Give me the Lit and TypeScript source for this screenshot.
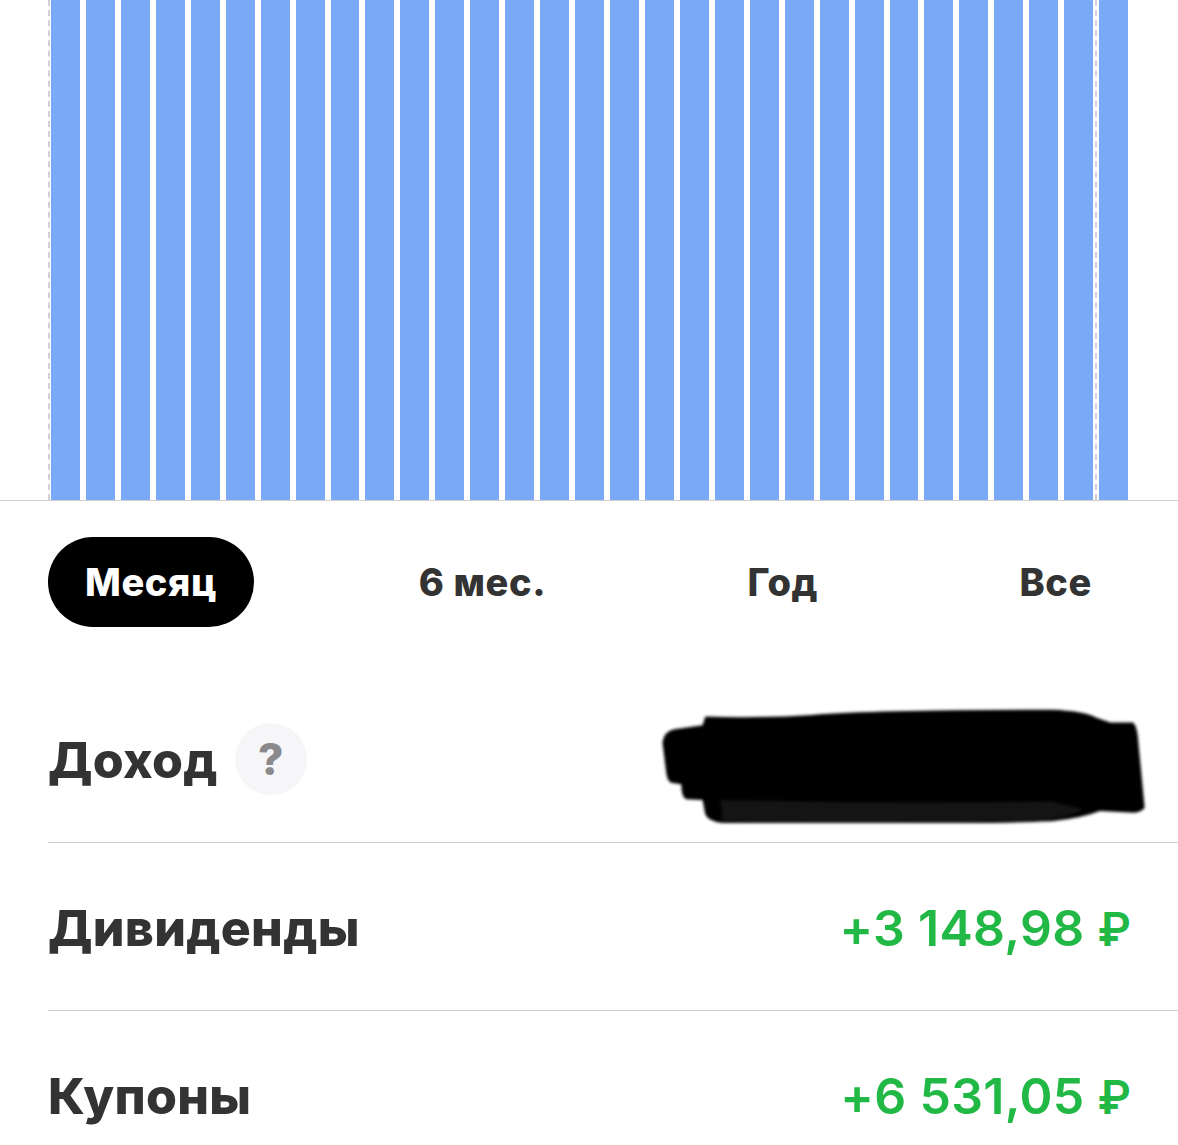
import { LitElement, html, css } from "lit";
import { customElement } from "lit/decorators.js";

const TABS = ["Месяц", "6 мес.", "Год", "Все"];
const BARS = Array.from({ length: 31 });

@customElement("app-root")
export class AppRoot extends LitElement {
  static styles = css`
    :host {
      display: block;
      width: 1178px;
      height: 1145px;
      overflow: hidden;
      background: #fff;
      font-family: Inter, "Liberation Sans", Arial, sans-serif;
      color: #333;
    }
    .chart {
      position: relative;
      display: flex;
      gap: 6px;
      height: 500px;
      padding: 0 50px 0 51px;
      border-bottom: 1px solid #cfcfcf;
    }
    .bar {
      flex: 1;
      background: #7aa9f7;
    }
    .dash {
      position: absolute;
      top: 0;
      bottom: 0;
      width: 0;
      border-left: 2px dashed #d2d2d6;
    }
    .dash.a { left: 48px; }
    .dash.b { left: 1095px; }
    .tabs {
      display: flex;
      justify-content: space-between;
      margin: 36px 49px 48px 48px;
    }
    .tab {
      height: 90px;
      padding: 0 37px;
      border-radius: 45px;
      display: flex;
      align-items: center;
      font-size: 38px;
      font-weight: 800;
      letter-spacing: 0.6px;
      color: #333;
    }
    .tab.on {
      background: #000;
      color: #fff;
    }
    .row {
      box-sizing: border-box;
      height: 168px;
      margin-left: 48px;
      padding: 2px 47px 0 0;
      display: flex;
      align-items: center;
      justify-content: space-between;
      border-bottom: 1px solid #cfcfcf;
    }
    .label {
      display: flex;
      align-items: center;
      gap: 17px;
      font-size: 50px;
      font-weight: 800;
      letter-spacing: 0.3px;
      color: #333;
    }
    .help {
      width: 72px;
      height: 72px;
      margin-bottom: 2px;
      border-radius: 50%;
      background: #f6f6f8;
      color: #8a8a8e;
      font-size: 44px;
      font-weight: 800;
      letter-spacing: 0;
      display: flex;
      align-items: center;
      justify-content: center;
    }
    .value {
      font-size: 50px;
      font-weight: 600;
      letter-spacing: 0.3px;
      color: #22b846;
    }
    .rub {
      font-size: 46px;
      letter-spacing: 0;
    }
    .mask {
      width: 486px;
      height: 116px;
      margin: 11px -15px 0 0;
      filter: blur(1.5px);
    }
  `;

  render() {
    return html`
      <div class="chart">
        ${BARS.map(() => html`<div class="bar"></div>`)}
        <div class="dash a"></div>
        <div class="dash b"></div>
      </div>
      <div class="tabs">
        ${TABS.map((t, i) => html`<div class="tab ${i === 0 ? "on" : ""}">${t}</div>`)}
      </div>
      <div class="row">
        <div class="label">Доход <span class="help">?</span></div>
        <svg class="mask" viewBox="58 47 1416 338">
          <path fill="#000" d="M190 75 Q350 80 500 70 Q700 55 1200 55 Q1290 58 1330 78 L1370 92 L1435 92 Q1445 95 1450 130 L1470 340 Q1465 352 1440 355 L1340 350 Q1290 370 1200 380 Q900 392 240 385 Q200 380 190 360 L182 318 L135 316 Q120 310 120 272 L90 268 Q78 262 75 230 L65 150 Q70 118 100 112 L182 100 Z" />
          <path fill="#141414" d="M235 318 Q700 330 1200 322 L1290 345 Q1250 370 1150 378 Q700 390 240 380 Z" />
        </svg>
      </div>
      <div class="row">
        <div class="label">Дивиденды</div>
        <div class="value">+3 148,98 <span class="rub">₽</span></div>
      </div>
      <div class="row">
        <div class="label">Купоны</div>
        <div class="value">+6 531,05 <span class="rub">₽</span></div>
      </div>
    `;
  }
}
